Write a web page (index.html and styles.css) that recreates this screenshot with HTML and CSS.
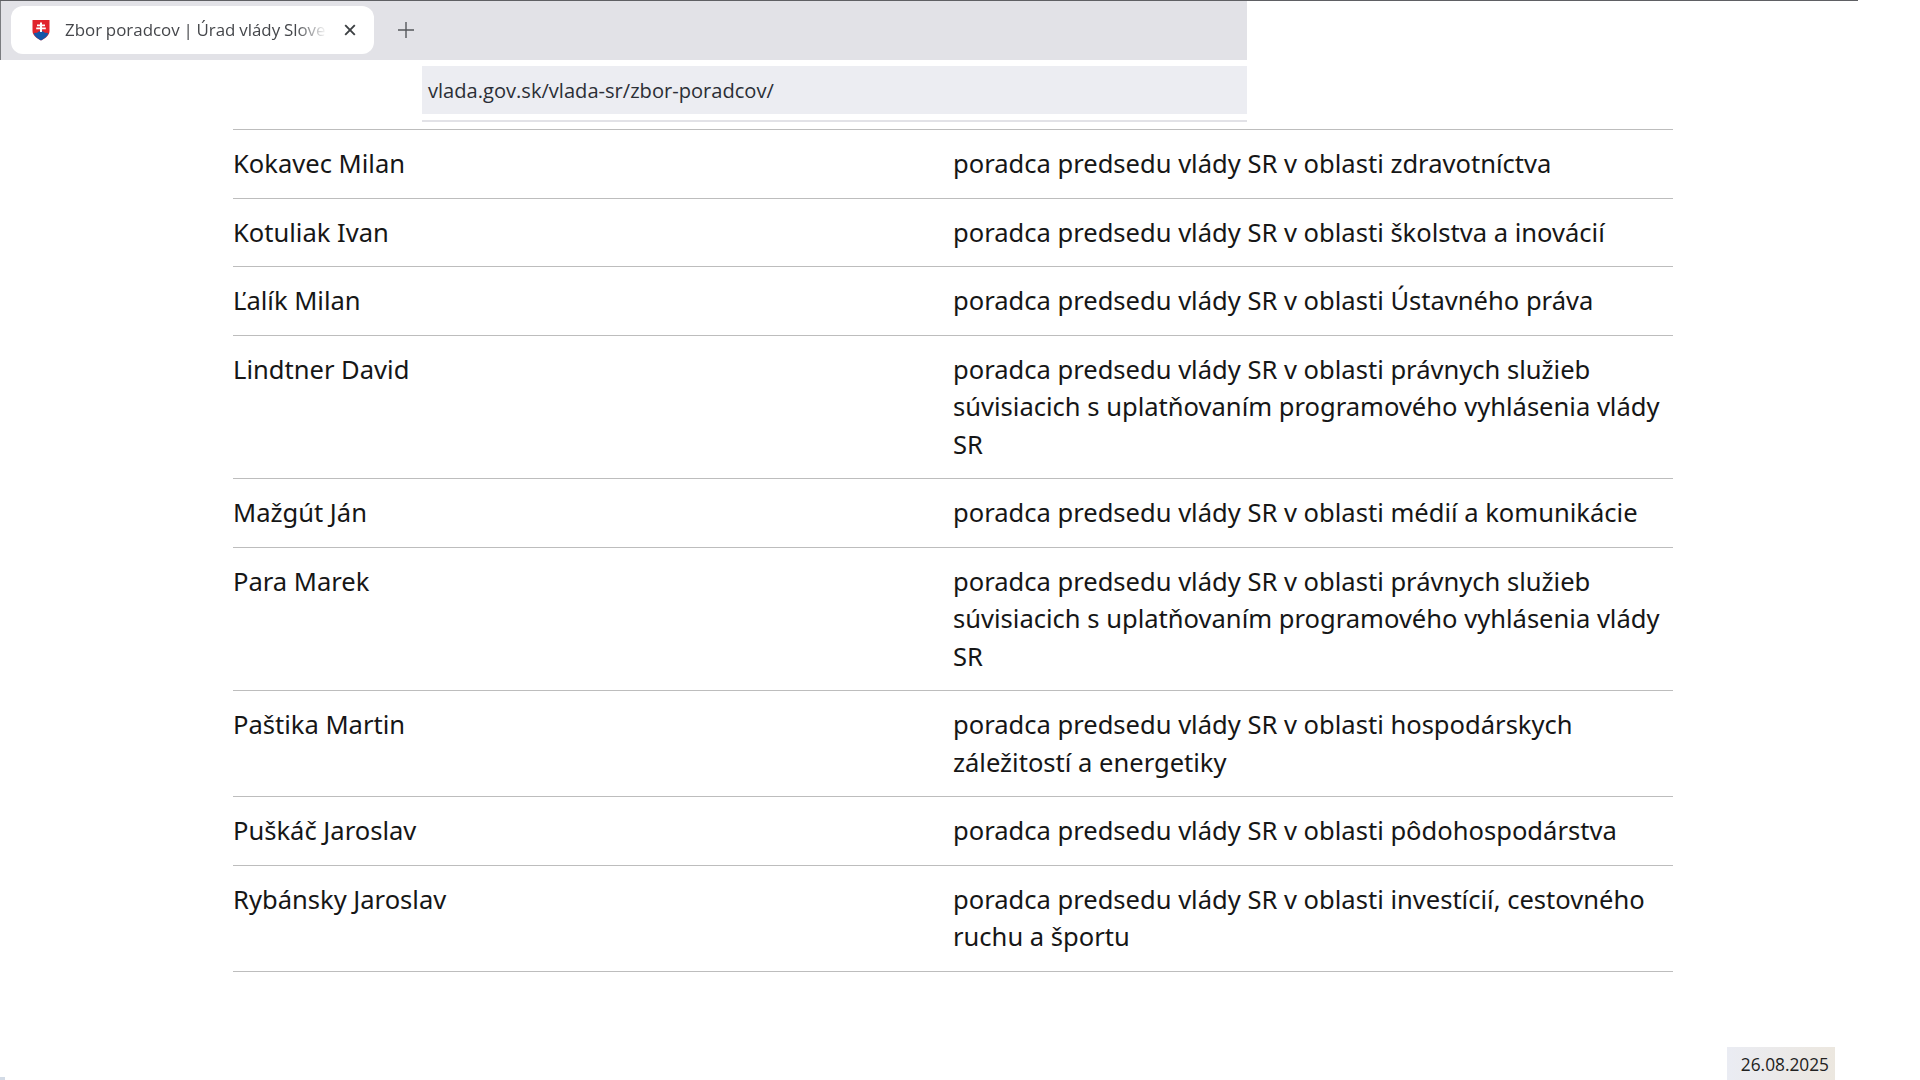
FILE: index.html
```html
<!DOCTYPE html>
<html lang="sk">
<head>
<meta charset="utf-8">
<title>Zbor poradcov</title>
<link rel="stylesheet" href="styles.css">
</head>
<body>
<div class="topline"></div>
<div class="tabstrip">
  <div class="tab">
    <svg class="favicon" viewBox="0 0 18 22" width="18" height="22">
      <path d="M0.5 1H17.5V12C17.5 16 14 19 9 21.5C4 19 0.5 16 0.5 12Z" fill="#e0242c"/>
      <path d="M1.6 14.5C3 13.4 4 13.6 5 14C6 12.6 8 12 9 12C10 12 12 12.6 13 14C14 13.6 15 13.4 16.4 14.5C15 17.6 12.4 19.6 9 21.5C5.6 19.6 3 17.6 1.6 14.5Z" fill="#1457a8"/>
      <path d="M8 3.5H10V5.4H13V7.2H10V8.4H13.8V10.2H10V13H8V10.2H4.2V8.4H8V7.2H5V5.4H8Z" fill="#fff"/>
    </svg>
    <span class="tabtitle">Zbor poradcov | Úrad vlády Slove</span>
    <svg class="tabclose" viewBox="0 0 12 12" width="12" height="12"><path d="M1.2 1.2L10.8 10.8M10.8 1.2L1.2 10.8" stroke="#3c4043" stroke-width="1.9"/></svg>
  </div>
  <svg class="newtab" viewBox="0 0 16 16" width="16" height="16"><path d="M8 0V16M0 8H16" stroke="#55585c" stroke-width="1.4"/></svg>
</div>
<div class="urlwrap">
  <div class="urlbar">vlada.gov.sk/vlada-sr/zbor-poradcov/</div>
  <div class="urlrule"></div>
</div>
<main class="people">
  <div class="row"><div class="name">Kokavec Milan</div><div class="role">poradca predsedu vlády SR v oblasti zdravotníctva</div></div>
  <div class="row"><div class="name">Kotuliak Ivan</div><div class="role">poradca predsedu vlády SR v oblasti školstva a inovácií</div></div>
  <div class="row"><div class="name">Ľalík Milan</div><div class="role">poradca predsedu vlády SR v oblasti Ústavného práva</div></div>
  <div class="row"><div class="name">Lindtner David</div><div class="role">poradca predsedu vlády SR v oblasti právnych služieb súvisiacich s uplatňovaním programového vyhlásenia vlády SR</div></div>
  <div class="row"><div class="name">Mažgút Ján</div><div class="role">poradca predsedu vlády SR v oblasti médií a komunikácie</div></div>
  <div class="row"><div class="name">Para Marek</div><div class="role">poradca predsedu vlády SR v oblasti právnych služieb súvisiacich s uplatňovaním programového vyhlásenia vlády SR</div></div>
  <div class="row"><div class="name">Paštika Martin</div><div class="role">poradca predsedu vlády SR v oblasti hospodárskych záležitostí a energetiky</div></div>
  <div class="row"><div class="name">Puškáč Jaroslav</div><div class="role">poradca predsedu vlády SR v oblasti pôdohospodárstva</div></div>
  <div class="row"><div class="name">Rybánsky Jaroslav</div><div class="role">poradca predsedu vlády SR v oblasti investícií, cestovného ruchu a športu</div></div>
</main>
<div class="clock">26.08.2025</div>
<div class="corner"></div>
</body>
</html>
```
FILE: styles.css
```css
html, body { margin: 0; padding: 0; height: 1080px; overflow: hidden; background: #fff; }
body { position: relative; font-family: "Noto Sans", sans-serif; color: #1f1f1f; }
.topline { height: 1px; width: 1858px; background: #5f6064; }
.tabstrip { width: 1247px; height: 59px; background: #e2e2e7; display: flex; align-items: flex-start; border-left: 1px solid #7a7c80; box-sizing: border-box; padding-left: 10px; padding-top: 5px; }
.tab { width: 363px; height: 48px; background: #fff; border-radius: 12px; display: flex; align-items: center; box-sizing: border-box; padding-left: 21px; }
.favicon { flex: none; }
.tabtitle { flex: none; width: 262px; margin: -2px 0 0 15px; white-space: nowrap; font-family: "Open Sans", sans-serif; font-size: 16.9px; word-spacing: -0.6px; color: #45474b; -webkit-mask-image: linear-gradient(to right, #000 88%, transparent 100%); mask-image: linear-gradient(to right, #000 88%, transparent 100%); }
.tabclose { flex: none; margin-left: 17px; }
.newtab { flex: none; margin-left: 24px; margin-top: 16px; }
.urlwrap { margin-left: 422px; width: 825px; padding-top: 6px; }
.urlbar { height: 48px; background: #ecedf2; box-sizing: border-box; padding-left: 6px; padding-top: 1px; line-height: 48px; font-family: "Open Sans", sans-serif; font-size: 20.1px; color: #2b2f36; }
.urlrule { height: 2px; margin-top: 6px; background: #e2e2e7; }
.people { margin: 7px 0 0 233px; width: 1440px; border-top: 1px solid #bdbdbd; }
.row { display: grid; grid-template-columns: 720px 1fr; border-bottom: 1px solid #bdbdbd; padding: 15px 0; font-family: "Noto Sans", sans-serif; font-size: 25.55px; line-height: 37.5px; color: #161616; }
.clock { position: absolute; left: 1727px; top: 1047px; width: 108px; height: 33px; box-sizing: border-box; padding-right: 6px; padding-top: 1px; text-align: right; line-height: 33px; font-family: "Open Sans", sans-serif; font-size: 17.3px; color: #222; background: linear-gradient(to right, #eaecf3, #ece7df); }
.corner { position: absolute; left: 0; top: 1077px; width: 5px; height: 3px; background: #d3dbe6; }
```
